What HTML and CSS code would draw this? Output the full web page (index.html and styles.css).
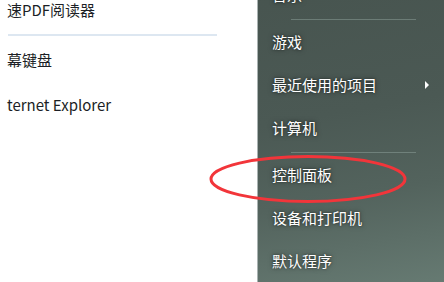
FILE: index.html
```html
<!DOCTYPE html>
<html>
<head>
    <meta charset="utf-8">
    <title>开始菜单</title>
    <link rel="stylesheet" href="styles.css">
</head>
<body>
    <div class="menu">
        <div class="programs">
            <div class="prog first">速PDF阅读器</div>
            <div class="prog-sep"></div>
            <div class="prog">幕键盘</div>
            <div class="prog">ternet Explorer</div>
        </div>

        <div class="places">
            <div class="place cut">音乐</div>
            <div class="sep"></div>
            <div class="place">游戏</div>
            <div class="place">最近使用的项目<span class="arrow"></span></div>
            <div class="place">计算机</div>
            <div class="sep"></div>
            <div class="place">控制面板</div>
            <div class="place">设备和打印机</div>
            <div class="place">默认程序</div>
        </div>
    </div>

    <svg class="mark" width="444" height="282" viewBox="0 0 444 282">
        <ellipse cx="308" cy="179" rx="97" ry="22.5" fill="none" stroke="#f2353a" stroke-width="3"></ellipse>
    </svg>
</body>
</html>
```

FILE: styles.css
```css
body {
    margin: 0;
    background-color: #fff;
    font-family: "Noto Sans CJK SC", "Noto Sans", sans-serif;
    font-size: 15px;
    overflow: hidden;
}
.menu {
    display: flex;
    height: 282px;
    overflow: hidden;
}
.programs {
    width: 257px;
    flex-shrink: 0;
    background-color: #fff;
    color: #1c1f26;
}
.prog {
    height: 42px;
    line-height: 42px;
    padding-left: 7px;
    white-space: nowrap;
}
.prog.first {
    height: 34px;
    line-height: 20px;
}
.prog-sep {
    height: 2px;
    margin: 0 40px 0 8px;
    background-color: #dde7f1;
}
.prog-sep + .prog {
    height: 48px;
    line-height: 48px;
}
.places {
    flex: 1;
    border-left: 1px solid #aab3b2;
    background:
        radial-gradient(ellipse 90px 22px at 380px 124px, rgba(30,38,36,0.45), rgba(30,38,36,0) 100%),
        radial-gradient(ellipse 120px 30px at 330px 150px, rgba(30,38,36,0.25), rgba(30,38,36,0) 100%),
        linear-gradient(170deg, #47544f 0%, #4b5954 45%, #53635d 70%, #667a72 100%);
    color: #fff;
    margin-top: -27px;
}
.place {
    position: relative;
    height: 43px;
    line-height: 43px;
    padding-left: 14px;
    white-space: nowrap;
    text-shadow: 0 0 5px rgba(0,0,0,0.55), 0 0 2px rgba(0,0,0,0.4);
}
.sep {
    height: 4px;
    margin: 0 28px 0 33px;
    box-sizing: border-box;
    border-bottom: 1px solid rgba(150,170,164,0.45);
}
.arrow {
    position: absolute;
    right: 15px;
    top: 18px;
    width: 0;
    height: 0;
    border-top: 4px solid transparent;
    border-bottom: 4px solid transparent;
    border-left: 4px solid #fff;
}
.mark {
    position: absolute;
    left: 0;
    top: 0;
    pointer-events: none;
}
```
